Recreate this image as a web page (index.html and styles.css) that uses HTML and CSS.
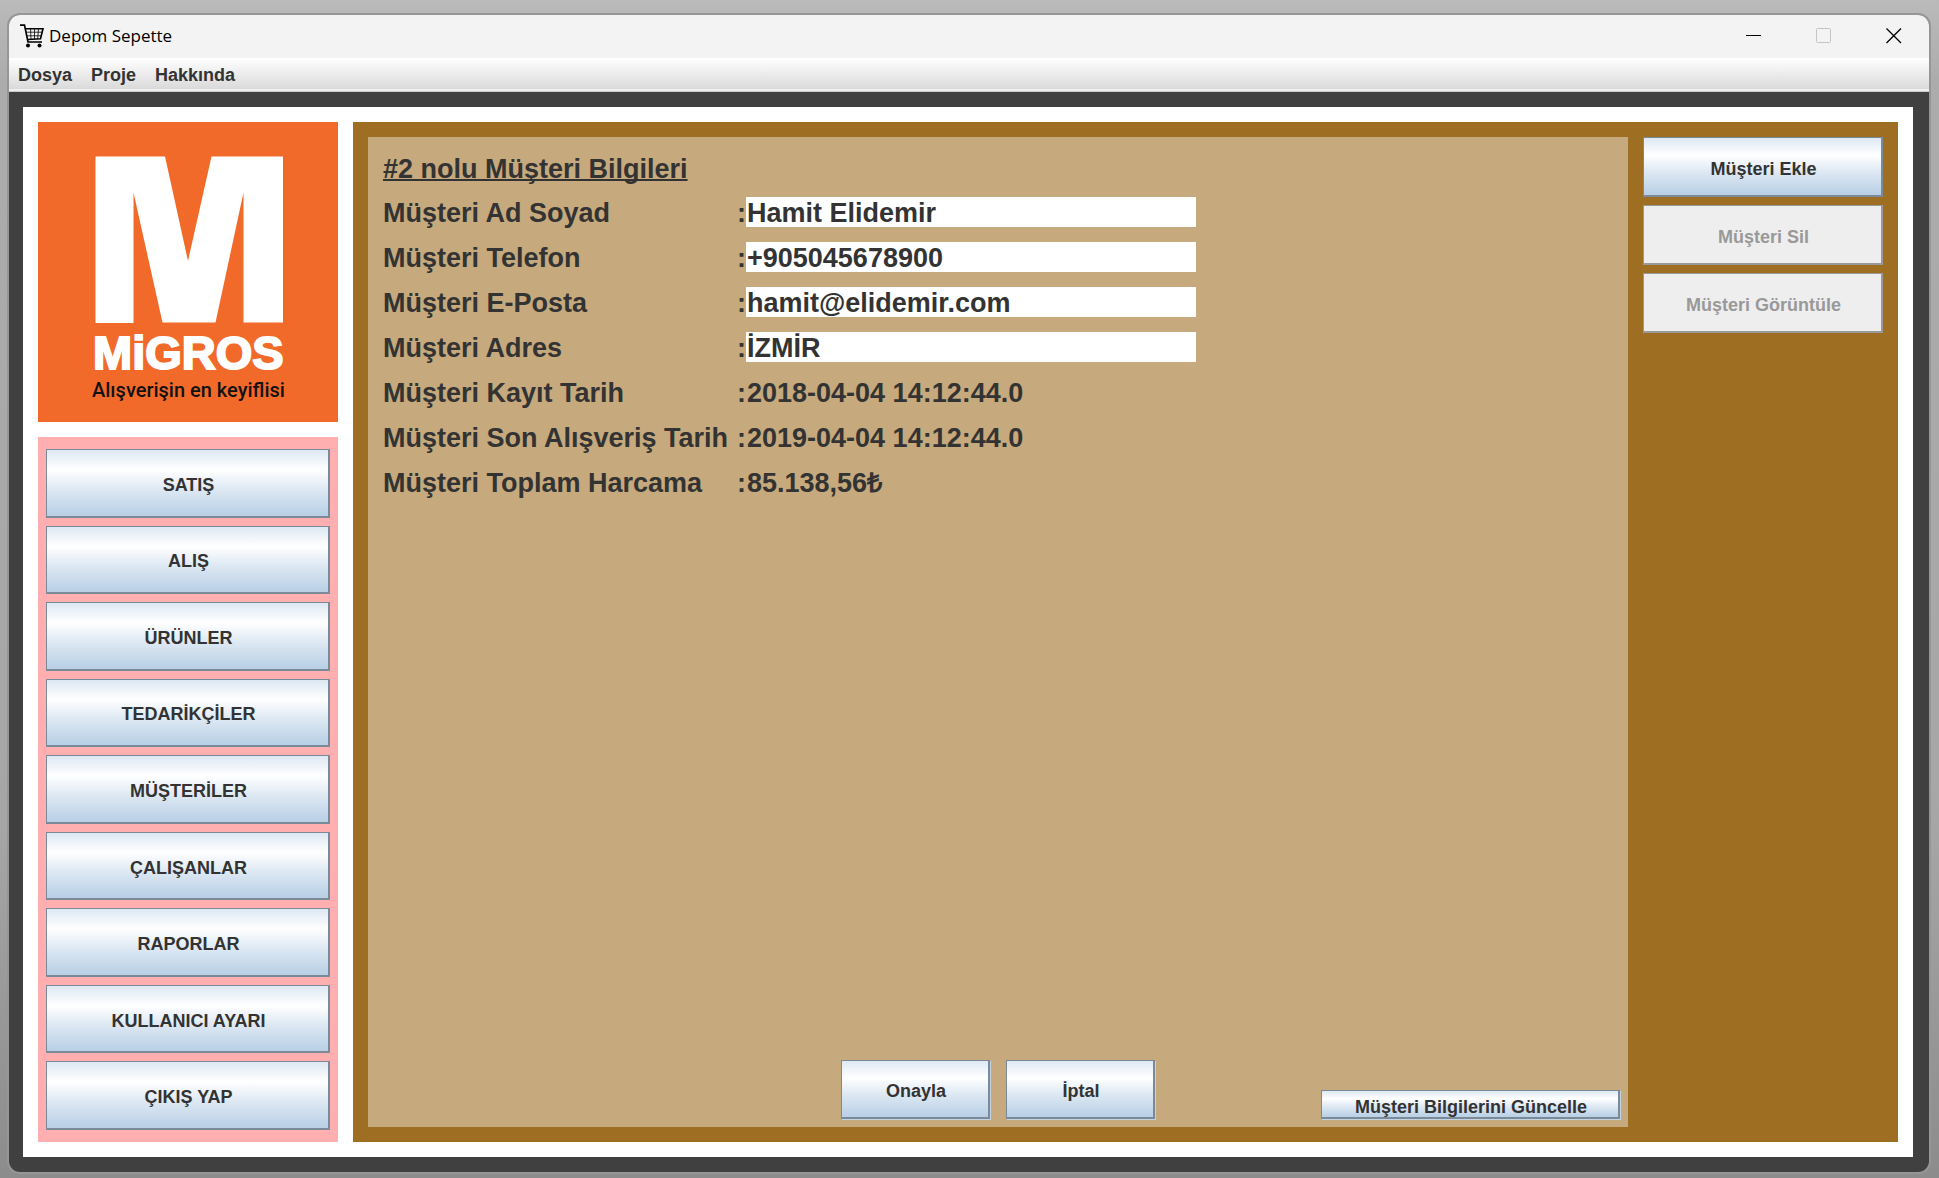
FILE: index.html
```html
<!DOCTYPE html>
<html lang="tr">
<head>
<meta charset="utf-8">
<meta name="viewport" content="width=device-width, initial-scale=1">
<title>Depom Sepette</title>
<link rel="stylesheet" href="styles.css">
</head>
<body>
<div class="window">
  <header class="titlebar">
    <svg class="cart" viewBox="0 0 24 24" width="24" height="24" aria-hidden="true">
      <path d="M0 1.200h4.500L8 18h14" fill="none" stroke="#000" stroke-width="1.700"/>
      <path d="M6 8.200h16M6.800 11.800h14.500M10.500 4.500l.5 11M14.500 4.500v10.500M18.500 4.500l-.8 10.500" fill="none" stroke="#000" stroke-width=".8"/>
      <path d="M5 4.800h18L20.500 14.700 7.500 15.500" fill="none" stroke="#000" stroke-width="1.600"/>
      <circle cx="8" cy="21.500" r="2"/><circle cx="19.500" cy="21.500" r="2"/>
    </svg>
    <h1 class="app-name">Depom Sepette</h1>
    <div class="controls">
      <button class="control" type="button" aria-label="Simge durumuna küçült"><svg viewBox="0 0 16 16" width="16" height="16"><path d="M0 7.500h15" stroke="#000" fill="none"/></svg></button>
      <button class="control" type="button" aria-label="Ekranı kapla" disabled><svg viewBox="0 0 16 16" width="16" height="16"><rect x=".5" y=".5" width="14" height="14" rx="1" stroke="#c4c4c4" fill="none"/></svg></button>
      <button class="control" type="button" aria-label="Kapat"><svg viewBox="0 0 16 16" width="16" height="16"><path d="M.5.5l14.500 14.500M15 .5L.5 15" stroke="#000" stroke-width="1.300" fill="none"/></svg></button>
    </div>
  </header>
  <nav class="menubar">
    <button class="menu" type="button">Dosya</button>
    <button class="menu" type="button">Proje</button>
    <button class="menu" type="button">Hakkında</button>
  </nav>
  <div class="frame">
    <div class="content">
      <aside class="sidebar">
        <svg class="logo" viewBox="0 0 300 300" role="img" aria-label="Migros">
          <rect width="300" height="300" fill="#f26a2a"/>
          <path d="M57.500 34.500H127L150 139 173.500 34.500H245V200.500H205.500V70.500L177.500 200.500H124.500L95.500 70.500V201H57.500Z" fill="#fff"/>
          <text class="wordmark" x="55" y="247">MiGROS</text>
          <text class="tagline" x="54" y="275">Alışverişin en keyiflisi</text>
        </svg>
        <nav class="main-nav">
          <button class="btn" type="button">SATIŞ</button>
          <button class="btn" type="button">ALIŞ</button>
          <button class="btn" type="button">ÜRÜNLER</button>
          <button class="btn" type="button">TEDARİKÇİLER</button>
          <button class="btn" type="button">MÜŞTERİLER</button>
          <button class="btn" type="button">ÇALIŞANLAR</button>
          <button class="btn" type="button">RAPORLAR</button>
          <button class="btn" type="button">KULLANICI AYARI</button>
          <button class="btn" type="button">ÇIKIŞ YAP</button>
        </nav>
      </aside>
      <main class="panel">
        <form class="customer">
          <h2 class="heading">#2 nolu Müşteri Bilgileri</h2>
          <div class="row"><label class="label" for="name">Müşteri Ad Soyad</label><span class="colon">:</span><input class="field" id="name" type="text" value="Hamit Elidemir"></div>
          <div class="row"><label class="label" for="phone">Müşteri Telefon</label><span class="colon">:</span><input class="field" id="phone" type="tel" value="+905045678900"></div>
          <div class="row"><label class="label" for="mail">Müşteri E-Posta</label><span class="colon">:</span><input class="field" id="mail" type="text" value="hamit@elidemir.com"></div>
          <div class="row"><label class="label" for="address">Müşteri Adres</label><span class="colon">:</span><input class="field" id="address" type="text" value="İZMİR"></div>
          <div class="row"><span class="label">Müşteri Kayıt Tarih</span><span class="colon">:</span><span class="value">2018-04-04 14:12:44.0</span></div>
          <div class="row"><span class="label">Müşteri Son Alışveriş Tarih</span><span class="colon">:</span><span class="value">2019-04-04 14:12:44.0</span></div>
          <div class="row"><span class="label">Müşteri Toplam Harcama</span><span class="colon">:</span><span class="value">85.138,56₺</span></div>
          <div class="form-actions">
            <div class="confirm">
              <button class="btn confirm-btn" type="button">Onayla</button>
              <button class="btn confirm-btn" type="button">İptal</button>
            </div>
            <button class="btn update-btn" type="button">Müşteri Bilgilerini Güncelle</button>
          </div>
        </form>
        <div class="side-actions">
          <button class="btn side-btn" type="button">Müşteri Ekle</button>
          <button class="btn side-btn" type="button" disabled>Müşteri Sil</button>
          <button class="btn side-btn" type="button" disabled>Müşteri Görüntüle</button>
        </div>
      </main>
    </div>
  </div>
</div>
</body>
</html>
```
FILE: styles.css
```css
* { box-sizing: border-box; }

body {
  margin: 0;
  min-height: 100vh;
  padding: 15px 10px 6px 9px;
  display: flex;
  background: linear-gradient(#bababa, #acacac 80px, #a6a6a6 70%, #8c8c8c);
  color: #333;
  font: bold 18px/24px "Liberation Sans", Arial, sans-serif;
}

button, input { font: inherit; color: inherit; }

.window {
  flex: 1;
  display: flex;
  flex-direction: column;
  border-radius: 11px;
  overflow: hidden;
  background: #404040;
  box-shadow: 0 0 0 2px #969696;
}

.titlebar {
  display: flex;
  align-items: center;
  height: 43px;
  padding: 0 0 2px 11px;
  gap: 5px;
  background: #f3f3f3;
}

.app-name {
  margin: 0;
  color: #000;
  font: 17px/24px "Open Sans", "Noto Sans", sans-serif;
}

.controls { display: flex; margin-left: auto; }

.control {
  width: 70px;
  height: 41px;
  padding: 0;
  border: 0;
  background: none;
  display: flex;
  align-items: center;
  justify-content: center;
}

.menubar {
  display: flex;
  gap: 19px;
  height: 34px;
  padding-left: 9px;
  background: linear-gradient(#fff, #dadada 31px, #eee 31px);
  border-bottom: 1px solid #ccc;
}

.menu {
  padding: 0;
  border: 0;
  background: none;
}

.frame {
  flex: 1;
  display: flex;
  padding: 15px 16px 15px 14px;
}

.content {
  flex: 1;
  display: flex;
  gap: 15px;
  padding: 15px;
  background: #fff;
}

.sidebar {
  display: flex;
  flex-direction: column;
  gap: 15px;
  width: 300px;
}

.logo { display: block; width: 100%; }

.wordmark {
  font: bold 47px "Liberation Sans", Arial, sans-serif;
  fill: #fff;
  stroke: #fff;
  stroke-width: 2px;
}

.tagline {
  font: 500 20px Roboto, sans-serif;
  fill: #111;
}

.main-nav {
  flex: 1;
  display: grid;
  grid-auto-rows: 1fr;
  gap: 8px;
  padding: 12px 8px;
  background: #ffafaf;
}

.btn {
  padding: 4px 0 0 2px;
  border: solid #7a8a99;
  border-width: 1px 2px 2px 1px;
  background: linear-gradient(#dde8f3, #fff 30%, #dde8f3 60%, #b8cfe5);
}

.btn:disabled {
  color: #999;
  border-color: #999;
  background: #eee;
}

.panel {
  flex: 1;
  display: flex;
  gap: 15px;
  padding: 15px;
  background: #9e6e23;
}

.customer {
  flex: 1;
  display: flex;
  flex-direction: column;
  gap: 15px;
  padding: 15px 7px 7px 15px;
  background: #c6a97c;
  font-size: 27px;
  line-height: 32px;
}

.heading {
  margin: 0;
  height: 30px;
  font-size: 27px;
  line-height: 34px;
  text-decoration: underline;
  text-decoration-thickness: 2px;
  text-underline-offset: 1px;
  text-decoration-skip-ink: none;
}

.row { display: flex; height: 30px; }

.label { width: 354px; white-space: nowrap; }

.colon { width: 9px; }

.field, .value {
  width: 450px;
  height: 30px;
  padding: 0 0 0 1px;
}

.field {
  padding-top: 2px;
  border: 0;
  background: #fff;
}

.form-actions {
  display: grid;
  grid-template-columns: 1fr auto 1fr;
  align-items: end;
  margin-top: auto;
  font-size: 18px;
  line-height: 24px;
}

.confirm {
  grid-column: 2;
  display: flex;
  gap: 16px;
  margin-right: 8px;
}

.confirm-btn, .update-btn {
  margin: 0 0 1px;
  box-shadow: 1px 1px #c3d3e2;
}

.confirm-btn { width: 149px; height: 59px; }

.update-btn {
  justify-self: end;
  width: 299px;
  height: 29px;
  margin-right: 1px;
}

.side-actions {
  display: flex;
  flex-direction: column;
  gap: 8px;
  width: 240px;
}

.side-btn { height: 60px; }
```
